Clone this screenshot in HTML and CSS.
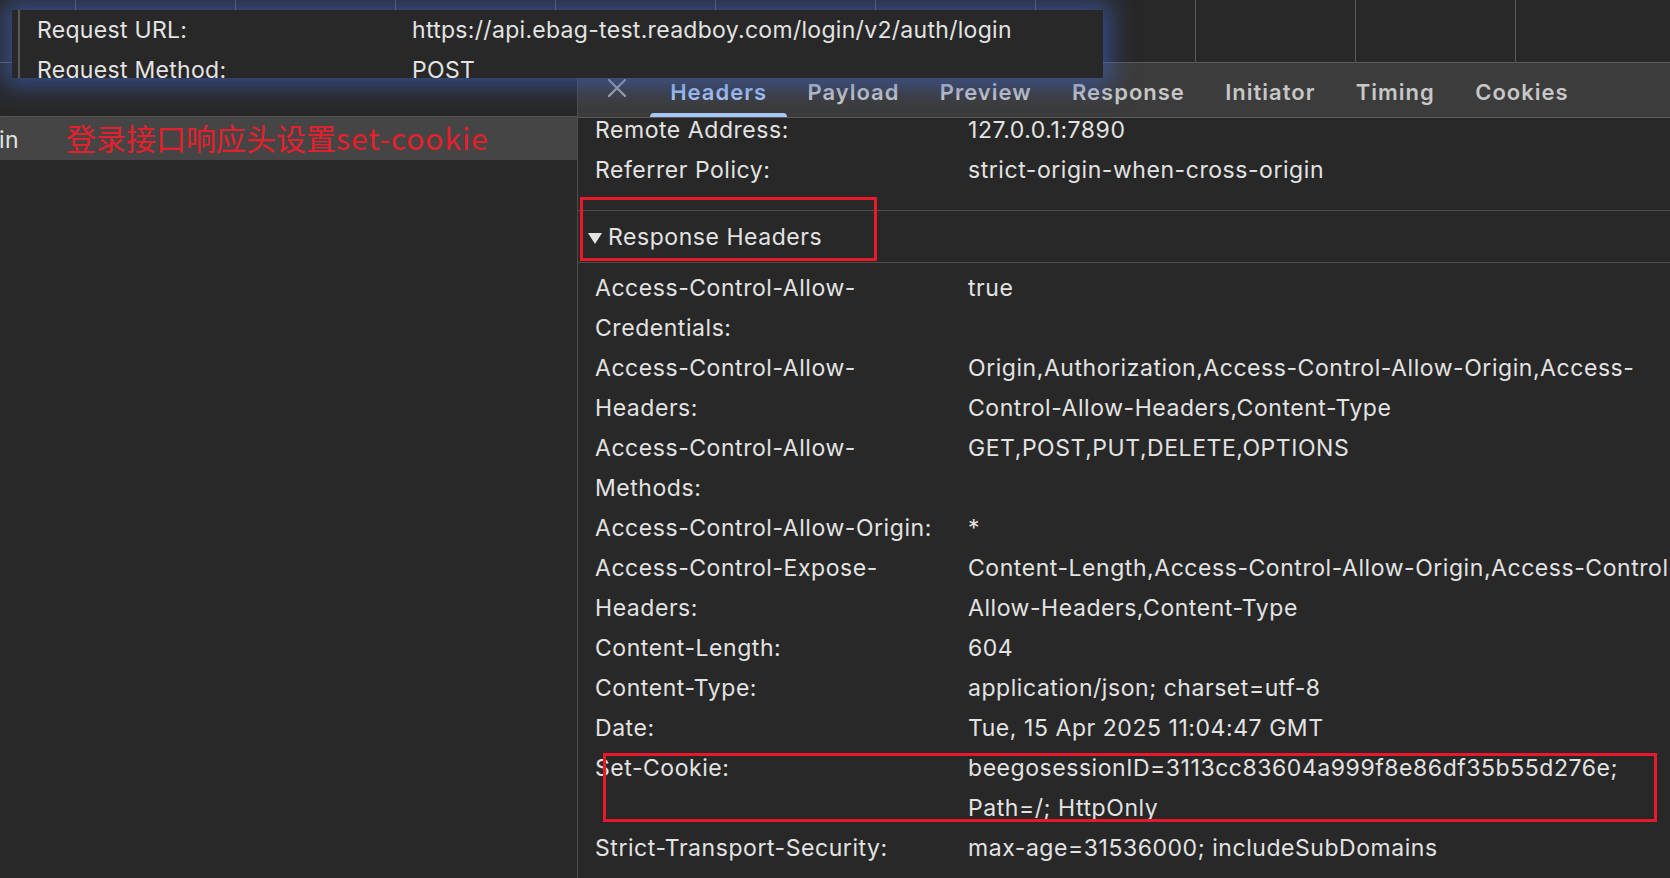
FILE: index.html
```html
<!DOCTYPE html>
<html lang="zh-CN">
<head>
<meta charset="utf-8">
<title>Network - Headers</title>
<link rel="stylesheet" href="styles.css">
</head>
<body>
<div class="app">
  <div class="topgrid">
    <div class="gcell first"></div>
    <div class="gcell"></div><div class="gcell"></div><div class="gcell"></div>
    <div class="gcell"></div><div class="gcell"></div><div class="gcell"></div>
    <div class="gcell"></div><div class="gcell"></div><div class="gcell"></div>
    <div class="gcell"></div>
  </div>
  <div class="main">
    <div class="left">
      <div class="req-row selected">
        <span class="req-name">in</span>
        <span class="note">登录接口响应头设置<span class="note-latin">set-cookie</span></span>
      </div>
    </div>
    <div class="right">
      <div class="tabs">
        <div class="close">
          <svg width="20" height="20" viewBox="0 0 20 20"><path d="M2 2 L18 18 M18 2 L2 18" stroke="#a9a9a9" stroke-width="2.2" stroke-linecap="round" fill="none"/></svg>
        </div>
        <div class="tab active">Headers</div>
        <div class="tab">Payload</div>
        <div class="tab">Preview</div>
        <div class="tab">Response</div>
        <div class="tab">Initiator</div>
        <div class="tab">Timing</div>
        <div class="tab">Cookies</div>
      </div>
      <div class="content">
        <div class="section general">
          <div class="kv"><div class="k">Remote Address:</div><div class="v">127.0.0.1:7890</div></div>
          <div class="kv"><div class="k">Referrer Policy:</div><div class="v">strict-origin-when-cross-origin</div></div>
        </div>
        <div class="sec-head"><span class="tri"></span>Response Headers</div>
        <div class="section resp">
          <div class="kv"><div class="k">Access-Control-Allow-<br>Credentials:</div><div class="v">true</div></div>
          <div class="kv"><div class="k">Access-Control-Allow-<br>Headers:</div><div class="v">Origin,Authorization,Access-Control-Allow-Origin,Access-<br>Control-Allow-Headers,Content-Type</div></div>
          <div class="kv"><div class="k">Access-Control-Allow-<br>Methods:</div><div class="v">GET,POST,PUT,DELETE,OPTIONS</div></div>
          <div class="kv"><div class="k">Access-Control-Allow-Origin:</div><div class="v">*</div></div>
          <div class="kv"><div class="k">Access-Control-Expose-<br>Headers:</div><div class="v">Content-Length,Access-Control-Allow-Origin,Access-Control-<br>Allow-Headers,Content-Type</div></div>
          <div class="kv"><div class="k">Content-Length:</div><div class="v">604</div></div>
          <div class="kv"><div class="k">Content-Type:</div><div class="v">application/json; charset=utf-8</div></div>
          <div class="kv"><div class="k">Date:</div><div class="v">Tue, 15 Apr 2025 11:04:47 GMT</div></div>
          <div class="kv"><div class="k">Set-Cookie:</div><div class="v">beegosessionID=3113cc83604a999f8e86df35b55d276e;<br>Path=/; HttpOnly</div></div>
          <div class="kv"><div class="k">Strict-Transport-Security:</div><div class="v">max-age=31536000; includeSubDomains</div></div>
        </div>
      </div>
    </div>
  </div>

  <div class="tooltip">
    <div class="kv tip"><div class="k">Request URL:</div><div class="v">https://api.ebag-test.readboy.com/login/v2/auth/login</div></div>
    <div class="kv tip"><div class="k">Request Method:</div><div class="v">POST</div></div>
  </div>

  <div class="mark mark-head"></div>
  <div class="mark mark-cookie"></div>
</div>
</body>
</html>
```

FILE: styles.css
```css
* { box-sizing: border-box; }
html, body { margin: 0; padding: 0; }
body {
  width: 1670px;
  height: 878px;
  overflow: hidden;
  background: #282828;
  font-family: Inter, "Noto Sans", "Noto Sans CJK SC", sans-serif;
  color: #e3e3e3;
  font-size: 23px;
  letter-spacing: 0.55px;
}
.app {
  position: relative;
  width: 1670px;
  height: 878px;
  overflow: hidden;
  display: flex;
  flex-direction: column;
}

/* top request grid row */
.topgrid {
  display: flex;
  height: 63px;
  border-bottom: 1px solid #5b5b5b;
  flex: none;
}
.gcell {
  flex: none;
  width: 160px;
  height: 100%;
  border-right: 1px solid #5b5b5b;
}
.gcell.first { width: 76px; }

.main {
  flex: 1;
  display: flex;
  min-height: 0;
}

/* left request list */
.left {
  flex: none;
  width: 578px;
  border-right: 1px solid #4d4d4d;
  padding-top: 53px;
}
.req-row {
  height: 44px;
  display: flex;
  align-items: center;
  white-space: nowrap;
}
.req-row.selected {
  background: #454545;
  border-top: 1px solid #555;
}
.req-name {
  margin-left: -1px;
  width: 67px;
  flex: none;
  padding-top: 3px;
}
.note {
  font-family: "Noto Sans CJK SC", "Noto Sans", sans-serif;
  font-size: 30px;
  letter-spacing: 0;
  color: #e5202c;
  line-height: 1;
  margin-top: -3px;
}
.note-latin { letter-spacing: 0.9px; }

/* right details panel */
.right {
  flex: 1;
  min-width: 0;
  display: flex;
  flex-direction: column;
}
.tabs {
  flex: none;
  height: 55px;
  background: #3c3c3c;
  border-bottom: 1px solid #5b5b5b;
  display: flex;
  align-items: stretch;
  white-space: nowrap;
}
.close {
  width: 72px;
  flex: none;
  display: flex;
  align-items: center;
  justify-content: center;
  padding-left: 6px;
  padding-bottom: 4px;
}
.tab {
  position: relative;
  padding: 4px 20.2px 0;
  display: flex;
  align-items: center;
  font-size: 22px;
  font-weight: 600;
  letter-spacing: 1px;
  color: #c7c7c7;
}
.tab.active { color: #a8c7fa; }
.tab.active::after {
  content: "";
  position: absolute;
  left: 0;
  right: 0;
  bottom: 0;
  height: 4px;
  background: #a8c7fa;
  border-radius: 4px 4px 0 0;
}

.content {
  flex: 1;
  overflow: hidden;
  position: relative;
}
.section { padding-left: 17px; }
.general {
  margin-top: -8px;
  padding-bottom: 20px;
  border-bottom: 1px solid #4d4d4d;
}
.sec-head {
  height: 52px;
  border-bottom: 1px solid #4d4d4d;
  display: flex;
  align-items: center;
  padding-left: 10px;
  padding-top: 1px;
  white-space: nowrap;
}
.tri {
  width: 0;
  height: 0;
  border-left: 7px solid transparent;
  border-right: 7px solid transparent;
  border-top: 11px solid #e3e3e3;
  margin-right: 6px;
  margin-top: 2px;
}
.resp { padding-top: 5px; }

.kv {
  display: grid;
  grid-template-columns: 373px auto;
  line-height: 40px;
  white-space: nowrap;
}

/* request tooltip */
.tooltip {
  position: absolute;
  left: 12px;
  top: 10px;
  width: 1091px;
  height: 68px;
  background: #282828;
  overflow: hidden;
  box-shadow: 0 0 22px 8px rgba(62, 98, 190, 0.62);
  padding-left: 25px;
  letter-spacing: 0.3px;
}
.tooltip::before {
  content: "";
  position: absolute;
  left: 6px;
  top: 0;
  bottom: 0;
  width: 2px;
  background: #5a5a5a;
}
.kv.tip { grid-template-columns: 375px auto; }

/* annotation boxes */
.mark {
  position: absolute;
  border: 3.5px solid #e8192b;
}
.mark-head { left: 580px; top: 197px; width: 297px; height: 64px; }
.mark-cookie { left: 603px; top: 753px; width: 1054px; height: 69px; }
```
